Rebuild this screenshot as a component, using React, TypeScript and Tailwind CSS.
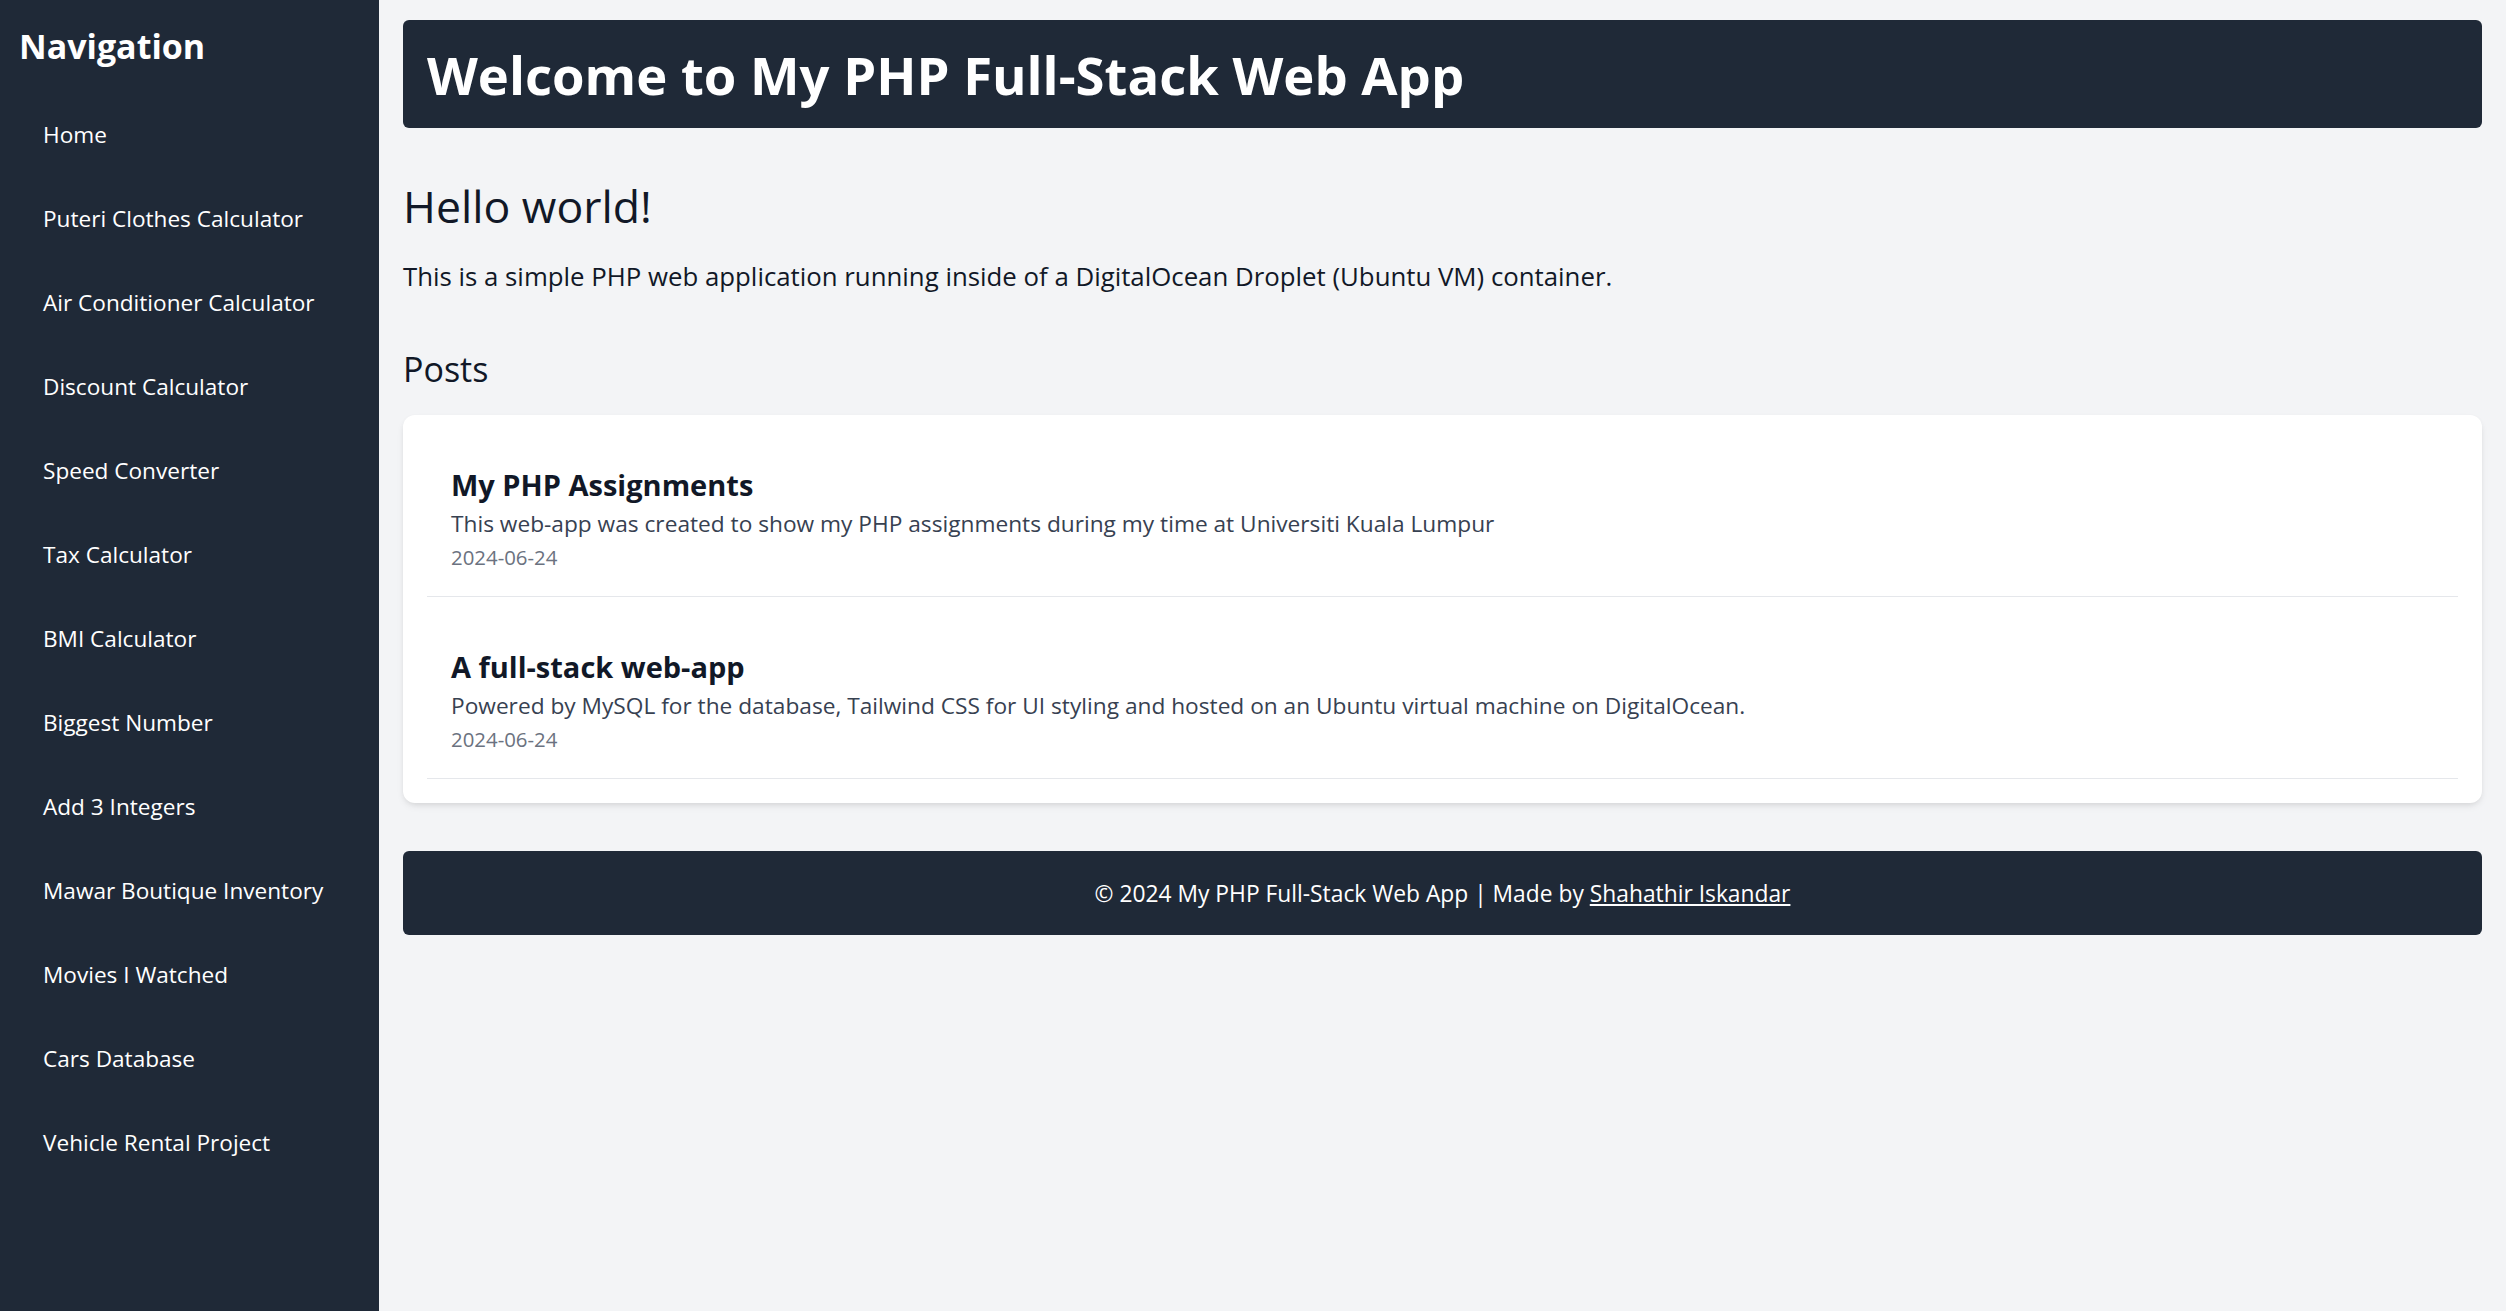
const navItems = [
  "Home",
  "Puteri Clothes Calculator",
  "Air Conditioner Calculator",
  "Discount Calculator",
  "Speed Converter",
  "Tax Calculator",
  "BMI Calculator",
  "Biggest Number",
  "Add 3 Integers",
  "Mawar Boutique Inventory",
  "Movies I Watched",
  "Cars Database",
  "Vehicle Rental Project",
]

const posts = [
  {
    title: "My PHP Assignments",
    body: "This web-app was created to show my PHP assignments during my time at Universiti Kuala Lumpur",
    date: "2024-06-24",
  },
  {
    title: "A full-stack web-app",
    body: "Powered by MySQL for the database, Tailwind CSS for UI styling and hosted on an Ubuntu virtual machine on DigitalOcean.",
    date: "2024-06-24",
  },
]

function Sidebar() {
  return (
    <aside className="w-[379px] shrink-0 bg-[#1f2937] px-[19px] pt-[22px] text-white">
      <h2 className="text-[34px] leading-[48px] font-bold">Navigation</h2>
      <ul className="mt-[35px] space-y-[24px]">
        {navItems.map((item) => (
          <li key={item}>
            <a href="#" className="block px-[24px] py-[12px] text-[22.6px] leading-[36px] text-white">
              {item}
            </a>
          </li>
        ))}
      </ul>
    </aside>
  )
}

function PostItem({ title, body, date }: { title: string; body: string; date: string }) {
  return (
    <div className="border-b border-[#e5e7eb] px-[24px] pt-[25px] pb-[23px]">
      <h3 className="text-[29px] leading-[42px] font-bold text-[#111827]">{title}</h3>
      <p className="text-[22.7px] leading-[36px] text-[#374151]">{body}</p>
      <p className="text-[20.4px] leading-[31px] text-[#6b7280]">{date}</p>
    </div>
  )
}

export default function App() {
  return (
    <div className="flex min-h-screen bg-[#f3f4f6] font-['Open_Sans','Noto_Sans',sans-serif] text-[#111827]">
      <Sidebar />

      <main className="flex-1 px-[24px] pt-[20px] pb-[24px]">
        <header className="rounded-[6px] bg-[#1f2937] px-[24px] pt-[25px] pb-[23px] text-white">
          <h1 className="text-[52.6px] leading-[60px] font-bold">Welcome to My PHP Full-Stack Web App</h1>
        </header>

        <section className="mt-[51px]">
          <h2 className="text-[44.6px] leading-[54px]">Hello world!</h2>
          <p className="mt-[23px] text-[25.8px] leading-[40px]">
            This is a simple PHP web application running inside of a DigitalOcean Droplet (Ubuntu VM) container.
          </p>
        </section>

        <section className="mt-[49px]">
          <h2 className="text-[34px] leading-[48px]">Posts</h2>
          <div className="mt-[22px] space-y-[24px] rounded-[12px] bg-white p-[24px] shadow-[0_4px_9px_-2px_rgba(0,0,0,0.1),0_2px_6px_-2px_rgba(0,0,0,0.08)]">
            {posts.map((post) => (
              <PostItem key={post.title} {...post} />
            ))}
          </div>
        </section>

        <footer className="mt-[48px] rounded-[6px] bg-[#1f2937] px-[24px] pt-[25px] pb-[23px] text-center text-[22.8px] leading-[36px] text-white">
          © 2024 My PHP Full-Stack Web App | Made by{" "}
          <a href="#" className="underline">
            Shahathir Iskandar
          </a>
        </footer>
      </main>
    </div>
  )
}
